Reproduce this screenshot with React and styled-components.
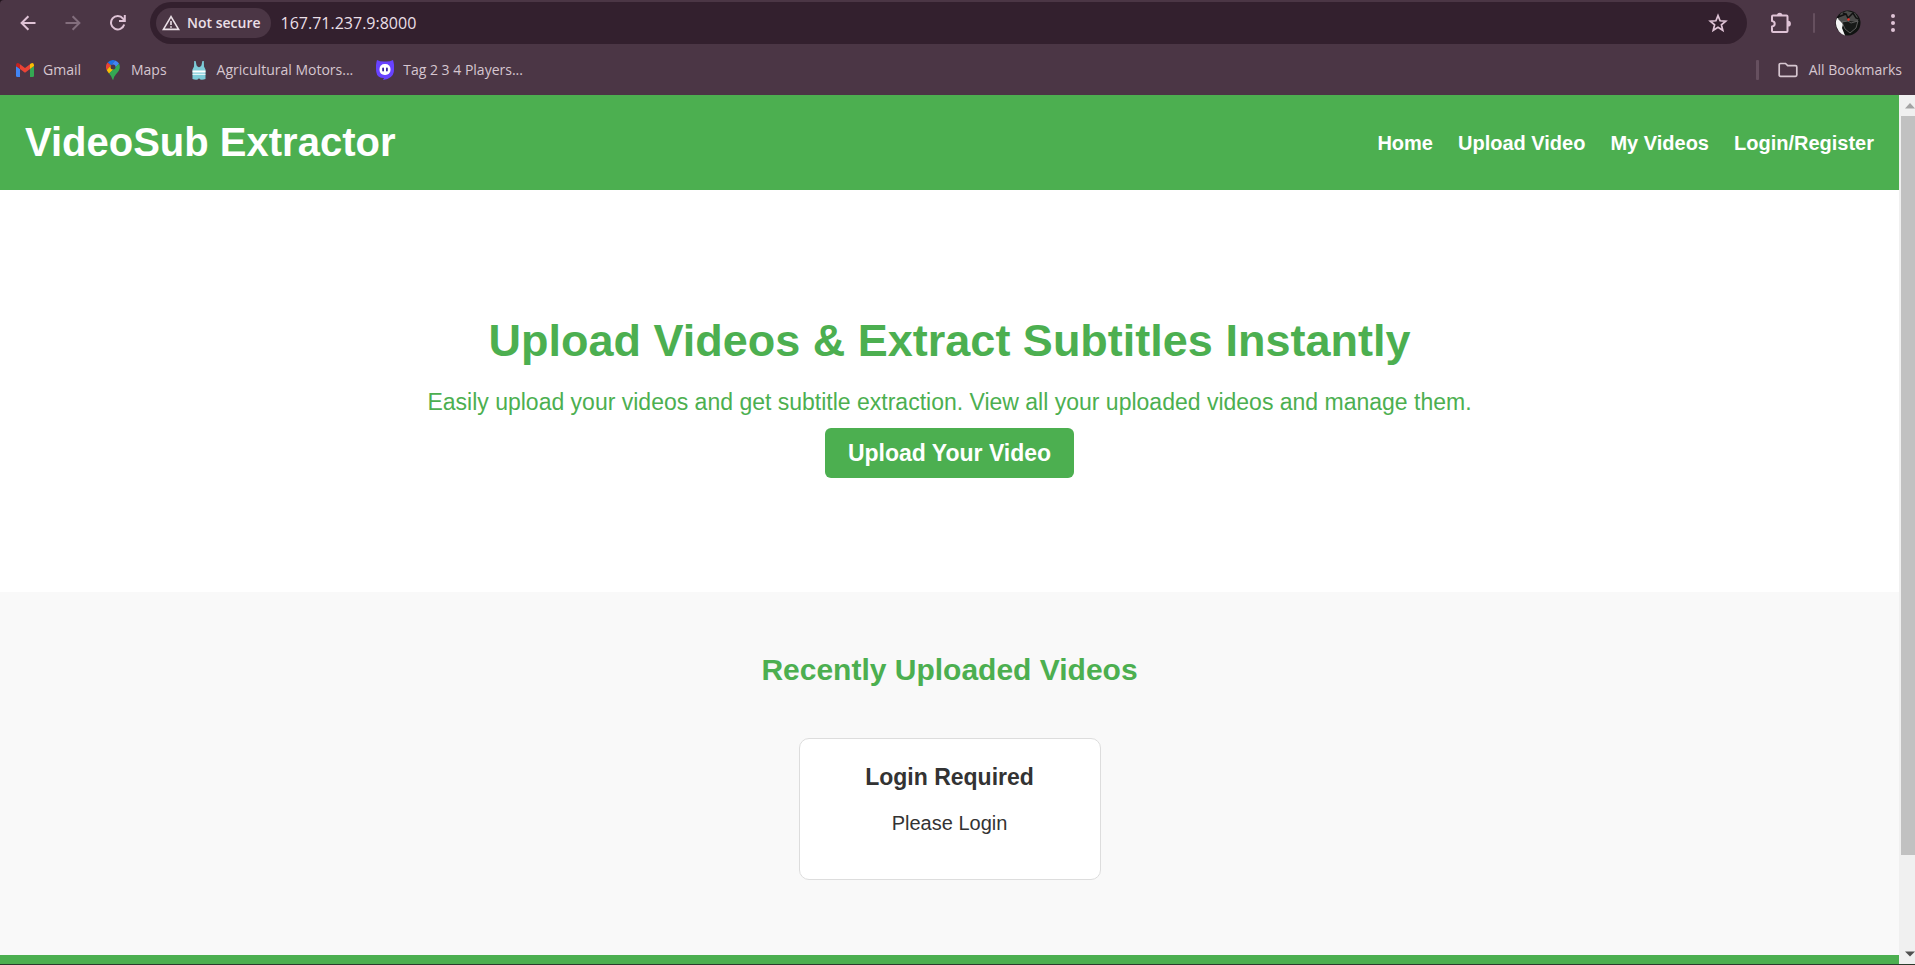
import React from 'react';
import styled, { createGlobalStyle } from 'styled-components';

const GlobalStyle = createGlobalStyle`
  * { box-sizing: border-box; }
  body { margin: 0; font-family: "Liberation Sans", Arial, sans-serif; }
  a { color: inherit; text-decoration: none; }
  h1, h2, h3, p { margin: 0; }
  button { border: 0; padding: 0; font: inherit; color: inherit; background: none; cursor: pointer; }
`;

const Shell = styled.div`
  display: flex;
  flex-direction: column;
  height: 100vh;
  overflow: hidden;
  border-bottom: 1px solid #2b3a2c;
  background: #21141d;
`;

const Chrome = styled.header`
  flex: none;
  border-top-left-radius: 4px;
  background: #4b3645;
  color: #d6c6d0;
  font-family: "Open Sans", "Noto Sans", sans-serif;
`;

const Toolbar = styled.div`
  display: flex;
  align-items: center;
  height: 46px;
  padding: 0 10px 0 16px;
`;

const NavButtons = styled.div`
  display: flex;
  gap: 21px;
`;

const IconButton = styled.button`
  display: flex;
  align-items: center;
  justify-content: center;
  width: 24px;
  height: 24px;
  color: ${(p) => (p.$dim ? '#836e7d' : '#dfc3d6')};
`;

const AddressBar = styled.div`
  flex: 1;
  display: flex;
  align-items: center;
  height: 42px;
  margin: 0 22px 0 20px;
  padding: 0 17px 0 6px;
  border-radius: 21px;
  background: #33202e;
`;

const SecurityChip = styled.button`
  display: flex;
  align-items: center;
  gap: 7px;
  height: 30px;
  padding: 0 10px 0 6px;
  border-radius: 15px;
  background: #4b3645;
  color: #eadfe6;
  font-size: 14px;
  font-weight: 600;
  line-height: 20px;
  white-space: nowrap;
`;

const AddressInput = styled.input`
  flex: 1;
  min-width: 0;
  margin-left: 10px;
  padding: 0;
  border: 0;
  outline: 0;
  background: none;
  color: #eadfe6;
  font: 400 16px/24px "Open Sans", "Noto Sans", sans-serif;
`;

const Divider = styled.span`
  flex: none;
  width: ${(p) => p.$width}px;
  height: 20px;
  border-radius: 1px;
  background: #66505f;
`;

const ToolbarEnd = styled.div`
  display: flex;
  align-items: center;
  gap: 20px;
`;

const Avatar = styled.button`
  display: flex;
`;

const BookmarksBar = styled.nav`
  display: flex;
  align-items: center;
  height: 49px;
  padding: 0 13px 1px 15px;
  font-size: 14px;
  line-height: 20px;
  white-space: nowrap;
`;

const Bookmark = styled.a`
  display: flex;
  align-items: center;
  gap: 8px;
  margin-right: 22px;
`;

const Favicon = styled.span`
  display: flex;
  justify-content: center;
  width: 20px;
`;

const AllBookmarks = styled.button`
  display: flex;
  align-items: center;
  gap: 11px;
  margin-left: 19px;
`;

const Spacer = styled.span`
  flex: 1;
`;

const Viewport = styled.div`
  flex: 1;
  display: flex;
  min-height: 0;
`;

const Page = styled.div`
  flex: 1;
  display: flex;
  flex-direction: column;
  min-width: 0;
  overflow: hidden;
  background: #fff;
`;

const SiteHeader = styled.header`
  flex: none;
  display: flex;
  align-items: center;
  justify-content: space-between;
  padding: 25px;
  background: #4caf50;
  color: #fff;
`;

const SiteTitle = styled.h1`
  font-size: 40px;
  line-height: 45px;
`;

const SiteNav = styled.nav`
  display: flex;
  gap: 25px;
  font-size: 20px;
  font-weight: 700;
  line-height: 24px;
`;

const Hero = styled.section`
  flex: none;
  display: flex;
  flex-direction: column;
  align-items: center;
  padding: 125px 25px 114px;
  color: #4caf50;
  text-align: center;
`;

const HeroTitle = styled.h2`
  font-size: 45px;
  line-height: 52px;
`;

const HeroText = styled.p`
  margin: 20px 0 11px;
  font-size: 23px;
  line-height: 30px;
`;

const UploadLink = styled.a`
  padding: 12px 23px;
  border-radius: 6px;
  background: #4caf50;
  color: #fff;
  font-size: 23px;
  font-weight: 700;
  line-height: 26px;
`;

const Recent = styled.section`
  flex: none;
  display: flex;
  flex-direction: column;
  align-items: center;
  gap: 50px;
  padding: 60px 25px 75px;
  background: #f9f9f9;
`;

const RecentTitle = styled.h2`
  color: #4caf50;
  font-size: 30px;
  line-height: 36px;
`;

const Card = styled.article`
  width: 302px;
  padding: 24px 24px 44px;
  border: 1px solid #ddd;
  border-radius: 10px;
  background: #fff;
  color: #333;
  text-align: center;
`;

const CardTitle = styled.h3`
  font-size: 23px;
  line-height: 28px;
`;

const CardText = styled.p`
  margin-top: 20px;
  font-size: 20px;
  line-height: 24px;
`;

const SiteFooter = styled.footer`
  flex: 1 0 9px;
  background: #4caf50;
`;

const Scrollbar = styled.div`
  flex: none;
  display: flex;
  flex-direction: column;
  width: 16px;
  padding-left: 2px;
  background: #f0f0f0;
`;

const ScrollArrow = styled.button`
  flex: none;
  display: flex;
  align-items: center;
  justify-content: flex-end;
  height: 21px;
`;

const ScrollThumb = styled.div`
  flex: 42;
  background: #c1c1c1;
`;

const ScrollRest = styled.div`
  flex: 5;
`;

const line = { fill: 'none', stroke: 'currentColor', strokeWidth: 2 };

const BackIcon = () => (
  <svg width="16" height="16" viewBox="0 0 16 16" {...line}><path d="M15.5 8H2M8.4 1.2 1.6 8l6.8 6.8" /></svg>
);
const ForwardIcon = () => (
  <svg width="16" height="16" viewBox="0 0 16 16" {...line}><path d="M.5 8H14M7.6 1.2 14.4 8l-6.8 6.8" /></svg>
);
const ReloadIcon = () => (
  <svg width="16" height="16" viewBox="0 0 16 16" {...line}><path d="M14.2 9.5A6.7 6.7 0 1 1 13 3.6L14.5 5.2M14.8 0V6H9" /></svg>
);
const WarningIcon = () => (
  <svg width="18" height="16" viewBox="0 0 18 16" fill="none" stroke="currentColor" strokeWidth="1.6"><path d="M9 1.6 1.4 14.4h15.2zM9 6v4M9 11.2v1.6" /></svg>
);
const StarIcon = () => (
  <svg width="20" height="20" viewBox="0 0 20 20" fill="none" stroke="currentColor" strokeWidth="1.7"><path d="m10 2.6 2.1 5.2 5.6.4-4.3 3.6 1.4 5.5L10 14.3l-4.8 3 1.4-5.5L2.3 8.200l5.600-.4z" /></svg>
);
const PuzzleIcon = () => (
  <svg width="22" height="22" viewBox="0 0 22 22">
    <path d="M3 3.500h13.500q1 0 1 1V19q0 1-1 1H3q-1 0-1-1v-4.500c3.600-.5 3.600-5 0-5.500V4.500q0-1 1-1z" fill="none" stroke="currentColor" strokeWidth="2" strokeLinejoin="round" />
    <path d="M7 3.500a2.700 2.700 0 0 1 5.400 0zM18 8.800a2.900 2.900 0 0 1 0 5.800z" fill="currentColor" />
  </svg>
);
const AvatarIcon = () => (
  <svg width="26" height="26" viewBox="0 0 26 26">
    <circle cx="13" cy="13" r="12.500" fill="#101311" />
    <path d="M2 8Q-1 15 4 21.500q3 3.500 6 4L7 18l1-4-3-5z" fill="#f4f4f4" />
    <path d="m6 3 6-2 8 2 4 6-2 3-8-1-7 2-4-4z" fill="#4b4b4a" />
    <path d="m3 7 8-3 2 4 5-5 3 5 3 1M8 3l4 2" fill="none" stroke="#111" strokeWidth="1.500" />
    <path d="m7 12 6-1 3 2 7-2-2 7-6 5-5-4z" fill="#171a18" stroke="#6d6d6c" strokeWidth=".8" />
    <circle cx="13.500" cy="9.500" r="1.200" fill="#ed2f27" />
  </svg>
);
const MenuIcon = () => (
  <svg width="4" height="20" viewBox="0 0 4 20" fill="currentColor"><circle cx="2" cy="3" r="2" /><circle cx="2" cy="10" r="2" /><circle cx="2" cy="17" r="2" /></svg>
);
const FolderIcon = () => (
  <svg width="20" height="16" viewBox="0 0 20 16" fill="none" stroke="currentColor" strokeWidth="1.700"><path d="M2.500 1.500h5l2.200 2.200h7.800q1.300 0 1.300 1.300v8q0 1.300-1.300 1.300h-15Q1.200 14.300 1.200 13V2.800q0-1.300 1.300-1.300z" /></svg>
);
const GmailIcon = () => (
  <svg width="18" height="14" viewBox="0 0 18 14">
    <path d="M0 3v9.500Q0 14 1.300 14H4V6z" fill="#4285f4" />
    <path d="M18 3v9.500q0 1.500-1.300 1.500H14V6z" fill="#34a853" />
    <path d="M0 2Q.5-1 3.200.5L4 1.200V6L0 3z" fill="#c5221f" />
    <path d="M18 2q-.5-3-3.200-1.500L14 1.200V6l4-3z" fill="#fbbc04" />
    <path d="m4 1.200 5 3.900 5-3.900V6L9 9.800 4 6z" fill="#ea4335" />
  </svg>
);
const MapsIcon = () => (
  <svg width="14" height="20" viewBox="0 0 14 20">
    <path d="M7 0a7 7 0 0 0-5.400 2.500L5 5.300 9.100.4Q8 0 7 0z" fill="#1a73e8" />
    <path d="M1.600 2.500A7 7 0 0 0 .7 10L5 5.300z" fill="#ea4335" />
    <path d="M9.100.4 5 5.300l4.100 3.300 3.900-5Q11.700 1.200 9.100.4z" fill="#4285f4" />
    <path d="M.7 10q.6 1.300 2.300 3.400L9.100 8.600 5 5.300z" fill="#fbbc04" />
    <path d="M13 3.600q1.600 3.200.1 6.400C11.600 13.200 8.200 15 7.400 19.600q-.4.800-.8 0Q6 16.300 3 13.400z" fill="#34a853" />
    <circle cx="7" cy="7" r="2.500" fill="#4b3645" />
  </svg>
);
const SingletIcon = () => (
  <svg width="14" height="19" viewBox="0 0 14 19">
    <path d="M2.200 0h1.400l1 4.500Q7 7.800 9.400 4.500l1-4.500h1.400l.2 5.500 1.500 3V18q-2.500 1-5.200.6L7 17.200l-1.300 1.400Q3 19 .5 18V8.500l1.500-3z" fill="#7dcbd8" />
    <path d="M.5 9.500h13v2H.5zM.5 12.800h13v1H.5z" fill="#fff" />
  </svg>
);
const GameIcon = () => (
  <svg width="18" height="20" viewBox="0 0 18 20">
    <path d="M1 0q3 1.700 8 1.500Q14 1.700 17 0q1.700 5 .8 12-1 6.500-10.800 8l1-2Q1 18 .3 12-.7 5 1 0z" fill="#6842ff" />
    <rect x="3.500" y="4" width="11" height="11" rx="5" fill="#fff" />
    <rect x="6.200" y="7.500" width="1.800" height="4" rx=".9" fill="#35209b" />
    <rect x="10" y="7.500" width="1.800" height="4" rx=".9" fill="#35209b" />
  </svg>
);

const bookmarks = [
  { label: 'Gmail', Icon: GmailIcon },
  { label: 'Maps', Icon: MapsIcon },
  { label: 'Agricultural Motors...', Icon: SingletIcon },
  { label: 'Tag 2 3 4 Players...', Icon: GameIcon },
];

const navLinks = ['Home', 'Upload Video', 'My Videos', 'Login/Register'];

export default function App() {
  return (
    <Shell>
      <GlobalStyle />
      <Chrome>
        <Toolbar>
          <NavButtons>
            <IconButton aria-label="Back"><BackIcon /></IconButton>
            <IconButton aria-label="Forward" $dim><ForwardIcon /></IconButton>
            <IconButton aria-label="Reload"><ReloadIcon /></IconButton>
          </NavButtons>
          <AddressBar>
            <SecurityChip><WarningIcon />Not secure</SecurityChip>
            <AddressInput aria-label="Address" defaultValue="167.71.237.9:8000" />
            <IconButton aria-label="Bookmark this tab"><StarIcon /></IconButton>
          </AddressBar>
          <ToolbarEnd>
            <IconButton aria-label="Extensions"><PuzzleIcon /></IconButton>
            <Divider $width={2} />
            <Avatar aria-label="Profile"><AvatarIcon /></Avatar>
            <IconButton aria-label="Menu"><MenuIcon /></IconButton>
          </ToolbarEnd>
        </Toolbar>
        <BookmarksBar aria-label="Bookmarks">
          {bookmarks.map(({ label, Icon }) => (
            <Bookmark key={label} href="#"><Favicon><Icon /></Favicon>{label}</Bookmark>
          ))}
          <Spacer />
          <Divider $width={3} />
          <AllBookmarks><FolderIcon />All Bookmarks</AllBookmarks>
        </BookmarksBar>
      </Chrome>
      <Viewport>
        <Page>
          <SiteHeader>
            <SiteTitle>VideoSub Extractor</SiteTitle>
            <SiteNav>
              {navLinks.map((label) => <a key={label} href="#">{label}</a>)}
            </SiteNav>
          </SiteHeader>
          <Hero>
            <HeroTitle>Upload Videos &amp; Extract Subtitles Instantly</HeroTitle>
            <HeroText>Easily upload your videos and get subtitle extraction. View all your uploaded videos and manage them.</HeroText>
            <UploadLink href="#">Upload Your Video</UploadLink>
          </Hero>
          <Recent>
            <RecentTitle>Recently Uploaded Videos</RecentTitle>
            <Card>
              <CardTitle>Login Required</CardTitle>
              <CardText>Please Login</CardText>
            </Card>
          </Recent>
          <SiteFooter />
        </Page>
        <Scrollbar>
          <ScrollArrow aria-label="Scroll up">
            <svg width="10" height="6" viewBox="0 0 10 6"><path d="M0 5.500 5 0l5 5.500z" fill="#a3a3a3" /></svg>
          </ScrollArrow>
          <ScrollThumb />
          <ScrollRest />
          <ScrollArrow aria-label="Scroll down">
            <svg width="10" height="6" viewBox="0 0 10 6"><path d="M0 .5h10L5 5.500z" fill="#505050" /></svg>
          </ScrollArrow>
        </Scrollbar>
      </Viewport>
    </Shell>
  );
}
